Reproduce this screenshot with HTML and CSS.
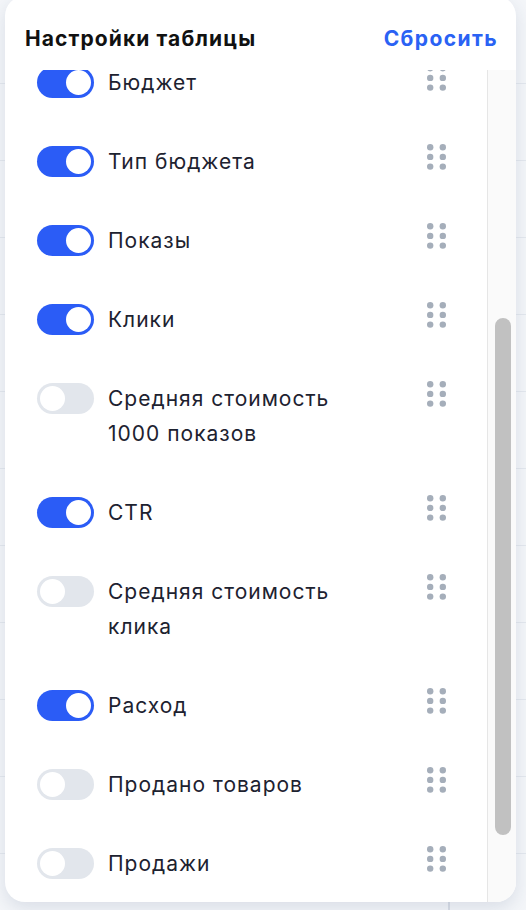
FILE: index.html
```html
<!DOCTYPE html>
<html lang="ru">
<head>
    <meta charset="UTF-8">
    <meta name="viewport" content="width=device-width, initial-scale=1.0">
    <title>Настройки таблицы</title>
    <link rel="stylesheet" href="styles.css">
</head>
<body>
    <div class="panel">
        <!-- Шапка панели -->
        <div class="panel-head">
            <h2 class="panel-title">Настройки таблицы</h2>
            <button class="reset">Сбросить</button>
        </div>
        <div class="panel-body">
            <!-- Список колонок (прокручен немного вниз) -->
            <div class="list">
                <ul class="cols">
                    <li class="col"><span class="switch on"></span><span class="col-name">Бюджет</span><svg class="grip" viewBox="0 0 19 26"><circle cx="3.2" cy="3.2" r="3.2"/><circle cx="15.8" cy="3.2" r="3.2"/><circle cx="3.2" cy="12.9" r="3.2"/><circle cx="15.8" cy="12.9" r="3.2"/><circle cx="3.2" cy="22.6" r="3.2"/><circle cx="15.8" cy="22.6" r="3.2"/></svg></li>
                    <li class="col"><span class="switch on"></span><span class="col-name">Тип бюджета</span><svg class="grip" viewBox="0 0 19 26"><circle cx="3.2" cy="3.2" r="3.2"/><circle cx="15.8" cy="3.2" r="3.2"/><circle cx="3.2" cy="12.9" r="3.2"/><circle cx="15.8" cy="12.9" r="3.2"/><circle cx="3.2" cy="22.6" r="3.2"/><circle cx="15.8" cy="22.6" r="3.2"/></svg></li>
                    <li class="col"><span class="switch on"></span><span class="col-name">Показы</span><svg class="grip" viewBox="0 0 19 26"><circle cx="3.2" cy="3.2" r="3.2"/><circle cx="15.8" cy="3.2" r="3.2"/><circle cx="3.2" cy="12.9" r="3.2"/><circle cx="15.8" cy="12.9" r="3.2"/><circle cx="3.2" cy="22.6" r="3.2"/><circle cx="15.8" cy="22.6" r="3.2"/></svg></li>
                    <li class="col"><span class="switch on"></span><span class="col-name">Клики</span><svg class="grip" viewBox="0 0 19 26"><circle cx="3.2" cy="3.2" r="3.2"/><circle cx="15.8" cy="3.2" r="3.2"/><circle cx="3.2" cy="12.9" r="3.2"/><circle cx="15.8" cy="12.9" r="3.2"/><circle cx="3.2" cy="22.6" r="3.2"/><circle cx="15.8" cy="22.6" r="3.2"/></svg></li>
                    <li class="col"><span class="switch"></span><span class="col-name">Средняя стоимость 1000 показов</span><svg class="grip" viewBox="0 0 19 26"><circle cx="3.2" cy="3.2" r="3.2"/><circle cx="15.8" cy="3.2" r="3.2"/><circle cx="3.2" cy="12.9" r="3.2"/><circle cx="15.8" cy="12.9" r="3.2"/><circle cx="3.2" cy="22.6" r="3.2"/><circle cx="15.8" cy="22.6" r="3.2"/></svg></li>
                    <li class="col"><span class="switch on"></span><span class="col-name">CTR</span><svg class="grip" viewBox="0 0 19 26"><circle cx="3.2" cy="3.2" r="3.2"/><circle cx="15.8" cy="3.2" r="3.2"/><circle cx="3.2" cy="12.9" r="3.2"/><circle cx="15.8" cy="12.9" r="3.2"/><circle cx="3.2" cy="22.6" r="3.2"/><circle cx="15.8" cy="22.6" r="3.2"/></svg></li>
                    <li class="col"><span class="switch"></span><span class="col-name">Средняя стоимость клика</span><svg class="grip" viewBox="0 0 19 26"><circle cx="3.2" cy="3.2" r="3.2"/><circle cx="15.8" cy="3.2" r="3.2"/><circle cx="3.2" cy="12.9" r="3.2"/><circle cx="15.8" cy="12.9" r="3.2"/><circle cx="3.2" cy="22.6" r="3.2"/><circle cx="15.8" cy="22.6" r="3.2"/></svg></li>
                    <li class="col"><span class="switch on"></span><span class="col-name">Расход</span><svg class="grip" viewBox="0 0 19 26"><circle cx="3.2" cy="3.2" r="3.2"/><circle cx="15.8" cy="3.2" r="3.2"/><circle cx="3.2" cy="12.9" r="3.2"/><circle cx="15.8" cy="12.9" r="3.2"/><circle cx="3.2" cy="22.6" r="3.2"/><circle cx="15.8" cy="22.6" r="3.2"/></svg></li>
                    <li class="col"><span class="switch"></span><span class="col-name">Продано товаров</span><svg class="grip" viewBox="0 0 19 26"><circle cx="3.2" cy="3.2" r="3.2"/><circle cx="15.8" cy="3.2" r="3.2"/><circle cx="3.2" cy="12.9" r="3.2"/><circle cx="15.8" cy="12.9" r="3.2"/><circle cx="3.2" cy="22.6" r="3.2"/><circle cx="15.8" cy="22.6" r="3.2"/></svg></li>
                    <li class="col"><span class="switch"></span><span class="col-name">Продажи</span><svg class="grip" viewBox="0 0 19 26"><circle cx="3.2" cy="3.2" r="3.2"/><circle cx="15.8" cy="3.2" r="3.2"/><circle cx="3.2" cy="12.9" r="3.2"/><circle cx="15.8" cy="12.9" r="3.2"/><circle cx="3.2" cy="22.6" r="3.2"/><circle cx="15.8" cy="22.6" r="3.2"/></svg></li>
                </ul>
            </div>
            <!-- Полоса прокрутки -->
            <div class="scroll-track"><div class="scroll-thumb"></div></div>
        </div>
    </div>
</body>
</html>
```

FILE: styles.css
```css
/* Фон: таблица под всплывающей панелью */
body {
    margin: 0;
    font-family: Inter, "Noto Sans", sans-serif;
    background-color: #f4f6f9;
    background-image:
        linear-gradient(to right, transparent 448px, #d9dee6 448px, #d9dee6 450px, transparent 450px),
        repeating-linear-gradient(to bottom, transparent 0, transparent 76px, #e4e8ee 76px, #e4e8ee 77px);
    background-position: 0 0, 0 7px;
    height: 910px;
    overflow: hidden;
}

/* Панель настроек */
.panel {
    width: 511px;
    height: 906px;
    margin: -4px 0 0 5px;
    background: #fff;
    border-radius: 20px;
    box-shadow: 0 6px 18px rgba(40, 60, 110, 0.13);
    display: flex;
    flex-direction: column;
    overflow: hidden;
}
.panel-head {
    display: flex;
    justify-content: space-between;
    align-items: center;
    padding: 29px 18px 17px 20px;
}
.panel-title {
    margin: 0;
    font-size: 21px;
    line-height: 28px;
    font-weight: 700;
    letter-spacing: 1.1px;
    color: #111;
}
.reset {
    border: none;
    background: none;
    padding: 0;
    font-family: inherit;
    font-size: 21px;
    line-height: 28px;
    font-weight: 700;
    letter-spacing: 1.4px;
    color: #2a62f4;
    cursor: pointer;
}

.panel-body {
    flex: 1;
    display: flex;
    min-height: 0;
}
.list {
    flex: 1;
    overflow: hidden;
}
.cols {
    list-style: none;
    margin: -5.5px 0 0;
    padding: 0 0 0 32px;
}
.col {
    display: flex;
    align-items: flex-start;
    margin-bottom: 44px;
}

/* Переключатель */
.switch {
    position: relative;
    flex: none;
    width: 57px;
    height: 31px;
    margin-top: 2px;
    border-radius: 16px;
    background: #e2e6ec;
}
.switch::after {
    content: "";
    position: absolute;
    top: 3px;
    left: 3px;
    width: 25px;
    height: 25px;
    border-radius: 50%;
    background: #fff;
}
.switch.on {
    background: #2b5cf6;
}
.switch.on::after {
    left: 29px;
}

.col-name {
    width: 262px;
    margin-left: 14px;
    font-size: 21px;
    line-height: 35px;
    letter-spacing: 1px;
    color: #1d2230;
}
.grip {
    flex: none;
    width: 19px;
    height: 26px;
    margin: 0 41px 0 auto;
    fill: #a5aeba;
}

/* Полоса прокрутки */
.scroll-track {
    flex: none;
    width: 28px;
    border-left: 1px solid #e6e6e6;
    background: #fafafa;
}
.scroll-thumb {
    width: 16px;
    height: 517px;
    margin: 248px 0 0 7px;
    border-radius: 8px;
    background: #c1c1c1;
}
```
